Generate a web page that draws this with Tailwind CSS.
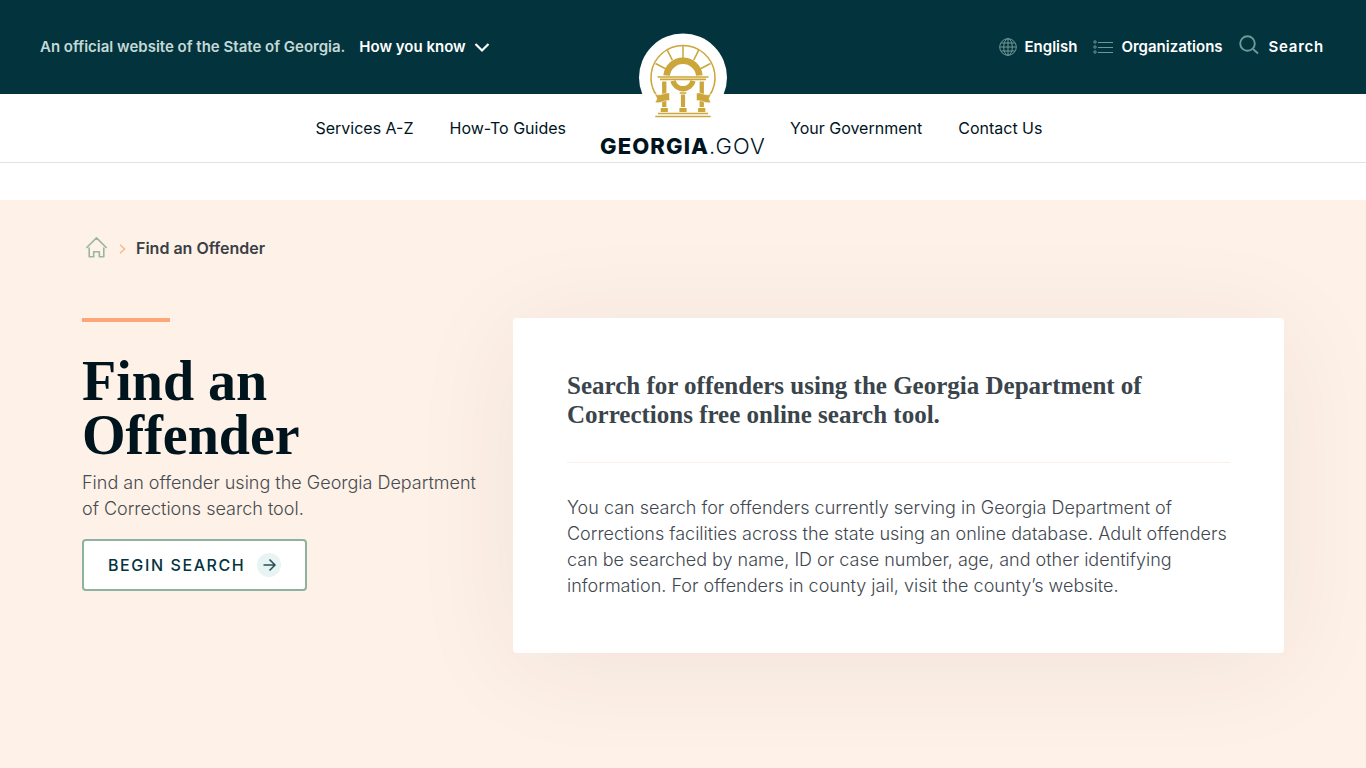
<!DOCTYPE html>
<html lang="en">
<head>
<meta charset="utf-8">
<meta name="viewport" content="width=device-width, initial-scale=1">
<title>Find an Offender | Georgia.gov</title>
<script src="https://cdn.jsdelivr.net/npm/@tailwindcss/browser@4"></script>
</head>
<body class="min-h-screen flex flex-col bg-white font-['Inter',sans-serif] text-[#00141e] overflow-x-hidden">
<header>
  <div class="bg-[#03343d] h-[94px] px-10 flex items-center justify-between text-[15px] leading-6 font-semibold text-white">
    <div class="flex items-center gap-3.5">
      <span class="text-[#c3d9d7]">An official website of the State of Georgia.</span>
      <button type="button" class="flex items-center gap-2">How you know
        <svg class="size-4" viewBox="0 0 16 16" fill="none" stroke="#fff" stroke-width="2.2" aria-hidden="true"><path d="M1.5 5 8 11.5 14.5 5"/></svg>
      </button>
    </div>
    <div class="flex items-center gap-4 pr-0.5">
      <button type="button" class="flex items-center gap-2">
        <svg class="size-[18px]" viewBox="0 0 18 18" fill="none" stroke="#6f9899" stroke-width="1" aria-hidden="true"><circle cx="9" cy="9" r="8.3"/><ellipse cx="9" cy="9" rx="4.3" ry="8.3"/><path d="M9 .7v16.6M.7 9h16.6M2 5h14M2 13h14"/></svg>
        English</button>
      <button type="button" class="flex items-center gap-2">
        <svg class="w-5 h-[14px]" viewBox="0 0 20 14" fill="none" stroke="#6f9899" stroke-width="1" aria-hidden="true"><circle cx="2" cy="2" r="1.2"/><circle cx="2" cy="7" r="1.2"/><circle cx="2" cy="12" r="1.2"/><path d="M5 2.5h15M5 7.5h15M5 12.5h15"/></svg>
        Organizations</button>
      <button type="button" class="flex items-center gap-2.5 tracking-wider">
        <svg class="size-5 -mt-1" viewBox="0 0 20 20" fill="none" stroke="#6f9899" stroke-width="1.9" aria-hidden="true"><circle cx="8.5" cy="8.500" r="7.300"/><path d="m14 14 5 4.500"/></svg>
        Search</button>
    </div>
  </div>
  <nav aria-label="Main" class="relative h-[69px] border-b border-[#dfe3e4] grid grid-cols-[1fr_170px_1fr] text-base leading-6">
    <div class="flex justify-end items-center gap-9 pr-8">
      <a href="#">Services A-Z</a>
      <a href="#">How-To Guides</a>
    </div>
    <a href="#" aria-label="Georgia.gov home" class="relative flex items-end justify-center pb-1">
      <svg class="absolute -top-[61px] left-1/2 -translate-x-1/2 size-[88px] z-10" viewBox="0 0 88 88" fill="none" stroke="#cba63a" aria-hidden="true">
        <circle cx="44" cy="44.500" r="44" fill="#fff" stroke="none"/>
        <path d="M17.500 62.500A32 32 0 1 1 70.500 62.500" stroke-width="1.500"/>
        <path d="M44 13v13M28.300 17.200l5 10M59.700 17.200l-5 10M16.500 30.500l10.500 5.500M71.500 30.500 61 36" stroke-width="1.500"/>
        <path d="M27.600 42.500a16.500 16.500 0 0 1 32.800 0" stroke-width="6.600"/>
        <path d="M34 47.800a10.300 10.300 0 0 0 20 0" stroke-width="5.500"/>
        <path d="M18.500 44h51M21 46.400h46" stroke-width="1.600"/>
        <g fill="#cba63a" stroke="none">
          <path d="M23.100 48.500h4.300v25.500h-4.300zM60.600 48.500h4.300v25.500h-4.300zM41.900 61.500h4.200v12.500h-4.200zM40.700 59.300h6.600v1.500h-6.600zM21.700 75h7.200v4h-7.200zM59.100 75h7.200v4h-7.200zM40.400 75h7.200v4h-7.200z"/>
          <path stroke="#fff" stroke-width=".5" d="M16 61.300c3 .8 5.500.6 8-.3 2.500-1 4.500-1.300 6.500-.8v7.500c-2.500-.3-4.500 0-6.800 1-2.500 1-4.500 1.300-7.500.8l1.800-3.700zM72 61.300c-3 .8-5.500.6-8-.3-2.500-1-4.500-1.300-6.500-.8v7.500c2.500-.3 4.500 0 6.800 1 2.500 1 4.500 1.300 7.500.8l-1.800-3.700z"/>
        </g>
        <path d="M19 80.500h50M16.300 83.500h55.400" stroke-width="1.300"/>
      </svg>
      <span class="text-[22px] leading-6 tracking-wider whitespace-nowrap"><b class="font-extrabold">GEORGIA</b><span class="font-light">.GOV</span></span>
    </a>
    <div class="flex items-center gap-9 pl-[22px]">
      <a href="#">Your Government</a>
      <a href="#">Contact Us</a>
    </div>
  </nav>
</header>
<main class="mt-[37px] grow bg-[#fef1e7] px-[82px] pt-9 pb-[115px]">
  <nav aria-label="Breadcrumb" class="flex items-center h-6 pl-1 text-base leading-6 font-semibold text-[#3a3f45]">
    <a href="#" aria-label="Home">
      <svg class="w-[21px] h-[22px]" viewBox="0 0 21 22" fill="none" stroke="#9ab5a0" stroke-width="1.600" stroke-linecap="round" stroke-linejoin="round" aria-hidden="true"><path d="M.8 10.500 10.500.9l9.700 9.600M3.200 11v8.800h4.500v-5h5.600v5h4.500V11"/></svg>
    </a>
    <svg class="w-[7px] h-[10px] ml-3 mr-[10px] mt-0.5" viewBox="0 0 7 10" fill="none" stroke="#f6b485" stroke-width="1.300" aria-hidden="true"><path d="m1 .7 4.700 4.300L1 9.300"/></svg>
    <span>Find an Offender</span>
  </nav>
  <div class="mt-[58px] grid grid-cols-[401fr_771fr] gap-[30px] items-start">
    <section>
      <div class="w-[88px] h-1 bg-[#fda678]"></div>
      <h1 class="mt-8 font-['Liberation_Serif',serif] font-bold text-[56px] leading-[54px]">Find an<br>Offender</h1>
      <p class="mt-2 text-lg leading-[26px] font-light text-[#454b50]">Find an offender using the Georgia Department of&nbsp;Corrections&nbsp;search tool.</p>
      <a href="#" class="mt-[17px] inline-flex items-center gap-3 h-[52px] px-6 rounded border-2 border-[#8fb1a0] bg-white text-base leading-6 font-medium tracking-widest text-[#03343d]">BEGIN SEARCH
        <svg class="size-6" viewBox="0 0 24 24" fill="none" aria-hidden="true"><circle cx="12" cy="12" r="12" fill="#e8f4f3"/><path d="M6.500 12h11.300M12.500 6.500 18 12l-5.500 5.500" stroke="#244f56" stroke-width="1.500"/></svg>
      </a>
    </section>
    <section class="bg-white rounded-[4px] px-[54px] pt-[53px] pb-[54px] shadow-[0_12px_110px_rgba(60,40,60,0.07)]">
      <h2 class="font-['Liberation_Serif',serif] font-bold text-[25px] leading-[29px] text-[#3a444b]">Search for offenders using the Georgia Department of Corrections free online search tool.</h2>
      <hr class="mt-[33px] border-[#faf0e9]">
      <p class="mt-8 text-lg leading-[26px] font-light text-[#3f4850]">You can search for offenders currently serving in Georgia Department of Corrections facilities across the state using an online database. Adult offenders can be searched by name, ID or case number, age, and other identifying information. For offenders in county jail, visit the county’s website.</p>
    </section>
  </div>
</main>
</body>
</html>
